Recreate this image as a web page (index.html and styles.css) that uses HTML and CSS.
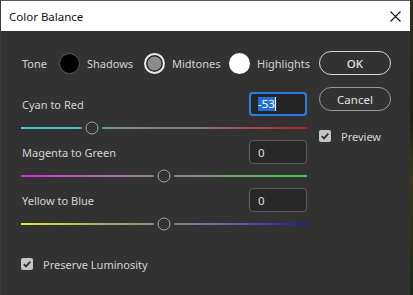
FILE: index.html
```html
<!DOCTYPE html>
<html lang="en">
<head>
    <meta charset="UTF-8">
    <title>Color Balance</title>
    <link rel="stylesheet" href="styles.css">
</head>
<body>
    <div class="window">
        <div class="titlebar">
            <span class="title">Color Balance</span>
            <svg class="close" width="11" height="11" viewBox="0 0 11 11">
                <path d="M0.5 0.5 L10.5 10.5 M10.5 0.5 L0.5 10.5" stroke="#111" stroke-width="1.1" fill="none"/>
            </svg>
        </div>

        <div class="content">
            <div class="main">
                <div class="tone-row">
                    <span class="tone-label">Tone</span>
                    <span class="tone-opt"><span class="swatch swatch-shadows"></span>Shadows</span>
                    <span class="tone-opt"><span class="swatch swatch-midtones"></span>Midtones</span>
                    <span class="tone-opt"><span class="swatch swatch-highlights"></span>Highlights</span>
                </div>

                <div class="channel">
                    <div class="channel-head">
                        <span>Cyan to Red</span>
                        <div class="num-input focused"><span class="sel">-53</span><span class="caret"></span></div>
                    </div>
                    <div class="slider">
                        <div class="track track-cyan"></div>
                        <span class="thumb" style="--pos: 0.235"></span>
                    </div>
                </div>

                <div class="channel">
                    <div class="channel-head">
                        <span>Magenta to Green</span>
                        <div class="num-input">0</div>
                    </div>
                    <div class="slider">
                        <div class="track track-magenta"></div>
                        <span class="thumb" style="--pos: 0.5"></span>
                    </div>
                </div>

                <div class="channel">
                    <div class="channel-head">
                        <span>Yellow to Blue</span>
                        <div class="num-input">0</div>
                    </div>
                    <div class="slider">
                        <div class="track track-yellow"></div>
                        <span class="thumb" style="--pos: 0.5"></span>
                    </div>
                </div>

                <div class="check-row preserve">
                    <span class="checkbox">
                        <svg width="12" height="12" viewBox="0 0 12 12"><path d="M2.8 6.2 L5 8.4 L9.3 3.6" stroke="#2c2c2c" stroke-width="1.7" fill="none"/></svg>
                    </span>
                    Preserve Luminosity
                </div>
            </div>

            <div class="side">
                <button class="btn btn-default">OK</button>
                <button class="btn btn-cancel">Cancel</button>
                <div class="check-row preview">
                    <span class="checkbox">
                        <svg width="12" height="12" viewBox="0 0 12 12"><path d="M2.8 6.2 L5 8.4 L9.3 3.6" stroke="#2c2c2c" stroke-width="1.7" fill="none"/></svg>
                    </span>
                    Preview
                </div>
            </div>
        </div>
    </div>
</body>
</html>
```

FILE: styles.css
```css
body {
    margin: 0;
    background: linear-gradient(180deg, #2b3318, #1d2410 40%, #3a3a14 60%, #1c2a12);
    font-family: "Noto Sans", "Open Sans", sans-serif;
    font-size: 11px;
    height: 295px;
    overflow: hidden;
}
.window {
    width: 410px;
    height: 295px;
    box-sizing: border-box;
    border-left: 1px solid #3c3c3c;
    border-top: 1px solid #5a5a5a;
    background: #323232;
    color: #d2d2d2;
}
.titlebar {
    height: 30px;
    background: #fff;
    display: flex;
    align-items: center;
    justify-content: space-between;
    padding: 0 9px 0 8px;
}
.title {
    color: #111;
    font-size: 11.5px;
}
.close {
    display: block;
}
.content {
    display: flex;
    padding: 20px 0 0 20px;
}
.main {
    width: 286px;
}
.side {
    width: 72px;
    margin-left: 12px;
    display: flex;
    flex-direction: column;
}
.tone-row {
    height: 24px;
    display: flex;
    align-items: center;
    margin-bottom: 17px;
}
.tone-label {
    width: 38px;
    padding-left: 1px;
    box-sizing: border-box;
    flex-shrink: 0;
}
.tone-opt {
    width: 85px;
    display: flex;
    align-items: center;
    gap: 7px;
    flex-shrink: 0;
}
.tone-opt:last-child {
    width: auto;
}
.swatch {
    width: 21px;
    height: 21px;
    border-radius: 50%;
    box-sizing: border-box;
    flex-shrink: 0;
}
.swatch-shadows {
    background: #000;
    border: 1px solid #5e5e5e;
}
.swatch-midtones {
    background: #8c8c8c;
    border: 2px solid #ececec;
    box-shadow: inset 0 0 0 1.5px #262626;
}
.swatch-highlights {
    background: #fff;
}
.channel-head {
    height: 24px;
    display: flex;
    align-items: center;
    justify-content: space-between;
    padding-left: 1px;
}
.num-input {
    width: 58px;
    height: 24px;
    box-sizing: border-box;
    border: 1px solid #5c5c5c;
    border-radius: 4px;
    background: #282828;
    padding-left: 8px;
    display: flex;
    align-items: center;
    color: #dcdcdc;
    font-size: 11.5px;
}
.num-input.focused {
    border: 2px solid #2a7de1;
    padding-left: 7px;
    background: #252525;
}
.sel {
    background: #1f6fd6;
    color: #fff;
    line-height: 14px;
}
.caret {
    width: 1px;
    height: 14px;
    background: #fff;
}
.slider {
    height: 24px;
    position: relative;
    display: flex;
    align-items: center;
}
.track {
    width: 100%;
    height: 2px;
}
.track-cyan {
    background: linear-gradient(90deg, #36d2d2, #3cc8c8 18%, #7a9090 35%, #8a7c7c 60%, #b02222 100%);
}
.track-magenta {
    background: linear-gradient(90deg, #d42ed4, #b468b4 25%, #8c888c 50%, #7aa07a 70%, #3cd03c 100%);
}
.track-yellow {
    background: linear-gradient(90deg, #e8e82a, #b4b464 25%, #8a8a84 50%, #6c6ca4 70%, #1818b8 100%);
}
.thumb {
    position: absolute;
    top: 50%;
    left: calc(7px + var(--pos) * (100% - 14px));
    width: 13px;
    height: 13px;
    box-sizing: border-box;
    transform: translate(-50%, -50%);
    border-radius: 50%;
    border: 1.5px solid #a6a6a6;
    background: #323232;
    box-shadow: 0 0 0 4px #323232;
}
.check-row {
    display: flex;
    align-items: center;
    gap: 10px;
    height: 12px;
}
.preserve {
    margin-top: 22px;
}
.preview {
    margin-top: 19px;
}
.checkbox {
    width: 12px;
    height: 12px;
    border-radius: 2px;
    background: #c4c4c4;
    flex-shrink: 0;
}
.checkbox svg {
    display: block;
}
.btn {
    height: 24px;
    border-radius: 12px;
    background: transparent;
    border: 1px solid #9a9a9a;
    color: #e2e2e2;
    font-family: inherit;
    font-size: 11.5px;
    padding: 0;
}
.btn-default {
    border-color: #d6d6d6;
    font-weight: 500;
}
.btn-cancel {
    margin-top: 12px;
}
```
